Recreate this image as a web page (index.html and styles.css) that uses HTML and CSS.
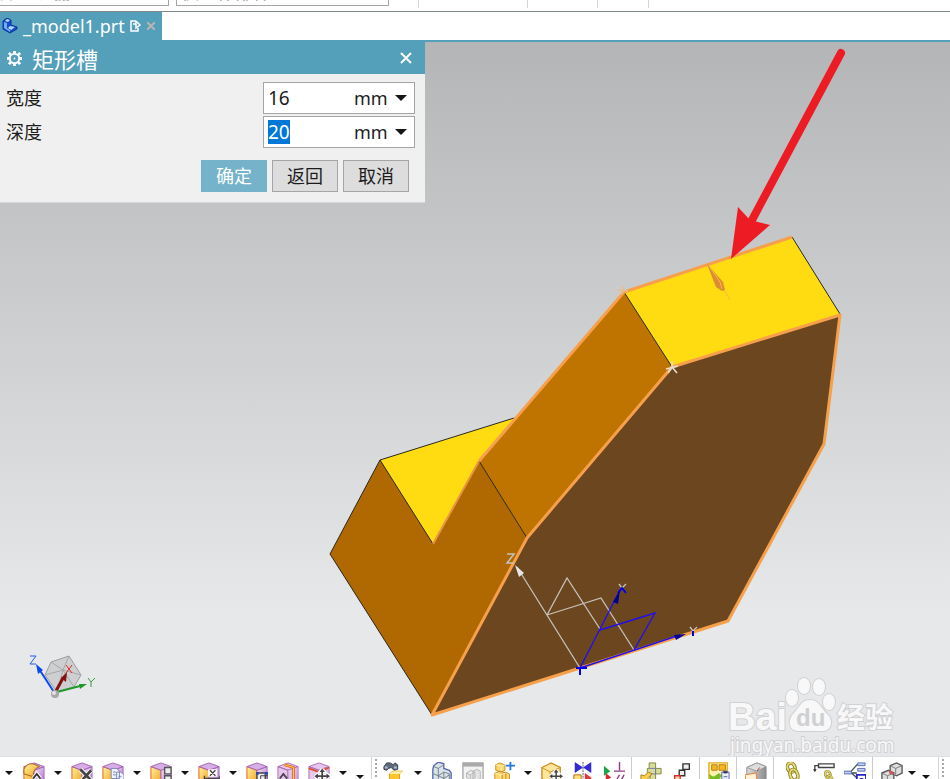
FILE: index.html
```html
<!DOCTYPE html>
<html lang="zh-CN">
<head>
<meta charset="utf-8">
<title>_model1.prt</title>
<link rel="stylesheet" href="styles.css">
</head>
<body>
<svg class="defs" aria-hidden="true">
  <defs>
    <linearGradient id="gold" x1="0" y1="0" x2="1" y2="1"><stop offset="0" stop-color="#fff09a"/><stop offset="1" stop-color="#f0a51e"/></linearGradient>
    <linearGradient id="mauve" x1="0" y1="0" x2="1" y2="1"><stop offset="0" stop-color="#f7e8fb"/><stop offset="1" stop-color="#b06ad0"/></linearGradient>
    <linearGradient id="steel" x1="0" y1="0" x2="1" y2="0"><stop offset="0" stop-color="#dcdcdc"/><stop offset="1" stop-color="#8c8c8c"/></linearGradient>
    <symbol id="cube" viewBox="0 0 24 24">
      <path d="M1 5 12 9V24L1 20Z" fill="url(#gold)" stroke="#e0562e"/>
      <path d="M12 9 23 5V20L12 24Z" fill="url(#mauve)" stroke="#a468b4"/>
      <path d="M1 5 12 1 23 5 12 9Z" fill="#d9aee6" stroke="#9c62ad"/>
    </symbol>
    <symbol id="pinkcube" viewBox="0 0 24 24">
      <path d="M1 5 12 9V24L1 20ZM12 9 23 5V20L12 24ZM1 5 12 1 23 5 12 9Z" fill="#e6c6ec" stroke="#a76caf"/>
      <path d="M12 9 23 5V20L12 24Z" fill="url(#mauve)" opacity=".5"/>
    </symbol>
    <symbol id="move" viewBox="0 0 18 18"><path d="M9 0 12 4H10V8H14V6L18 9 14 12V10H10V18H8V10H4V12L0 9 4 6V8H8V4H6Z" fill="#444" stroke="#fff" stroke-width="3" paint-order="stroke"/></symbol>
    <symbol id="chain" viewBox="0 0 16 24"><g fill="none"><ellipse cx="6" cy="6" rx="4" ry="5" transform="rotate(-20 6 6)" stroke="#8e842d" stroke-width="4"/><ellipse cx="6" cy="6" rx="4" ry="5" transform="rotate(-20 6 6)" stroke="#e8dc70" stroke-width="2"/><ellipse cx="9" cy="14" rx="4" ry="6" transform="rotate(-20 9 14)" stroke="#8e842d" stroke-width="4"/><ellipse cx="9" cy="14" rx="4" ry="6" transform="rotate(-20 9 14)" stroke="#e8dc70" stroke-width="2"/></g></symbol>
    <symbol id="down" viewBox="0 0 12 6"><path d="M0 0H12L6 6Z" fill="#151515"/></symbol>
  </defs>
</svg>

<header class="selection-bar">
  <select class="filter" aria-label="选择过滤器"><option>没有选择过滤器</option></select>
  <select class="scope" aria-label="选择范围"><option>仅工作部件</option></select>
  <div class="cells"><i></i><i class="wide"></i><i class="medium"></i><i class="small"></i></div>
</header>

<nav class="tabs">
  <div class="tab">
    <svg width="16" height="16" viewBox="0 0 16 16" aria-hidden="true"><path d="M1 3 5 0 9 2V7L15 9V11L8 15 1 11Z" fill="#164bc4" stroke="#0934a0"/><path d="M2 4 5 5V10L8 12V14L2 10Z" fill="#70adff"/><path d="M5 1 8 2 6 4 3 3ZM8 8 13 9 9 12 6 10Z" fill="#b3d5ff"/></svg>
    <a href="#scene">_model1.prt</a>
    <svg width="11" height="12" viewBox="0 0 11 12" aria-hidden="true"><path d="M6 1H1V11H8V8M3 4H6M6 1 10 5 6 8V1" fill="none" stroke="#fff" stroke-width="1.5"/></svg>
    <button class="tab-close" type="button" aria-label="关闭"><svg width="8" height="8" viewBox="0 0 8 8"><path d="M0 0 8 8M8 0 0 8" stroke="#b9b4b2" stroke-width="2"/></svg></button>
  </div>
</nav>

<main class="viewport" id="scene">
  <svg class="scene" viewBox="0 42 950 714" preserveAspectRatio="xMinYMin slice" role="img" aria-label="模型">
    <g stroke-linejoin="round">
      <path d="M380 460 514 418 479 461 433 544Z" fill="#ffdb11"/>
      <path d="M380 460 433 544 479 461 527 538 432 715 330 554Z" fill="#b06900"/>
      <path d="M624 292 672 367 527 538 479 461Z" fill="#bf7400"/>
      <path d="M624 292 792 237 840 314 672 367Z" fill="#ffdb11"/>
      <path d="M672 367 840 315 824 444 728 621 432 715 527 538Z" fill="#6c461f"/>
      <path d="M514 418 380 460 433 544M380 460 330 554 432 715M479 461 527 538M624 292 672 367M792 237 840 314" fill="none" stroke="#282820"/>
      <path d="M433 544 479 461" stroke="#e89545" stroke-width="2"/>
      <path d="M479 461 624 292 792 237M672 367 840 315 824 444 728 621 432 715 527 538Z" fill="none" stroke="#f7a04b" stroke-width="3"/>
    </g>
    <path d="M707 264 723 282 725 290 722 291 716 287Z" fill="#db8d31"/><path d="M709 266 720 282 722 289M724 290 730 300" fill="none" stroke="#ffb44e"/>
    <path d="M666 369 678 366M672 361V367L668 373M672 367 677 373" stroke="#e4ddd0" stroke-width="1.6" fill="none"/>
    <path d="M617 290 628 291M622 286 624 291 619 295" stroke="#e8bd8e" stroke-width="1.4" fill="none"/>
    <g fill="none" stroke="#c5c2bc" stroke-width="1.3">
      <path d="M580 668 517 567M547 615 567 578 600 629M547 615 601 598 634 650"/>
      <path d="M507 554H514L507 563H514" stroke-width="1.5"/><path d="M619 584 622 588 626 584M690 627 693 631 697 627"/>
    </g>
    <path d="M515 565 524 573 519 577Z" fill="#e6e6e6"/>
    <path d="M580 668 620 590M600 630 655 613 634 650M580 668 680 635" fill="none" stroke="#2110e8" stroke-width="1.4"/>
    <path d="M576 668H587M580 668V675M618 593 622 588 626 593M693 631V636" fill="none" stroke="#0000ee" stroke-width="2"/>
    <path d="M620 590 613 602 618 604ZM686 634 674 635 676 640Z" fill="#000097"/>
    <path d="M841 53 751 222" stroke="#ed1c24" stroke-width="8" stroke-linecap="round"/>
    <path d="M731 259 738 207 750 220 770 225Z" fill="#ed1c24"/>
    <path d="M45 675 51 662 69 656 81 675 74 687 57 692Z" fill="#cecfd0" stroke="#9c9d9e"/>
    <path d="M45 675 63 670 81 675M51 662 63 670 74 687M69 656 63 670 57 692" fill="none" stroke="#a7a8a9"/>
    <path d="M54 692 39 669" stroke="#0c46ef" stroke-width="2"/><path d="M36 664 43 670 38 674Z" fill="#0c46ef"/>
    <path d="M30 656H36L30 664H36" fill="none" stroke="#245ae2"/>
    <path d="M57 692 80 686" stroke="#21982c" stroke-width="2"/><path d="M87 684 79 684 80 689Z" fill="#21982c"/>
    <path d="M88 678 91 682 95 678M91 682V687" fill="none" stroke="#379b3e"/>
    <path d="M56 691 63 678" stroke="#861111" stroke-width="3"/><path d="M67 672 61 678 66 682Z" fill="#861111"/><path d="M66 665 72 673M72 665 66 673" stroke="#e02929"/>
    <circle cx="55" cy="694" r="4" fill="#a8a8a8"/><circle cx="54" cy="693" r="2" fill="#e2e2e2"/>
    <g class="watermark" fill="#f8f8f8" stroke="#d0d1d3" paint-order="stroke">
      <ellipse cx="792" cy="698" rx="6" ry="8"/><ellipse cx="804" cy="686" rx="6" ry="8"/><ellipse cx="819" cy="687" rx="6" ry="8"/><ellipse cx="829" cy="702" rx="6" ry="8"/>
      <path d="M810 700C819 700 821 708 827 714 834 720 832 731 822 731 816 731 804 731 799 731 788 731 788 720 793 714 800 707 801 700 810 700Z"/>
      <text class="logo" x="728" y="730">Bai</text><text class="exp" x="837" y="728">经验</text><text class="site" x="730" y="752">jingyan.baidu.com</text>
      <text class="du" x="796" y="726">du</text>
    </g>
  </svg>

  <form class="dialog" aria-labelledby="dialog-title">
    <div class="titlebar">
      <svg width="15" height="15" viewBox="0 0 16 16" aria-hidden="true"><circle cx="8" cy="8" r="5" fill="none" stroke="#fff" stroke-width="2"/><path d="M8 0V3M8 13V16M0 8H3M13 8H16M2 2 4 4M12 12 14 14M2 14 4 12M12 4 14 2" stroke="#fff" stroke-width="3"/><circle cx="8" cy="8" r="1" fill="#fff"/></svg>
      <h1 id="dialog-title">矩形槽</h1>
      <button class="close" type="button" aria-label="关闭"><svg width="12" height="12" viewBox="0 0 12 12"><path d="M1 1 11 11M11 1 1 11" stroke="#fff" stroke-width="2"/></svg></button>
    </div>
    <div class="fields">
      <div class="field"><label for="width">宽度</label><div class="combo"><input id="width" value="16"><select aria-label="宽度单位"><option>mm</option></select><svg width="12" height="6"><use href="#down"/></svg></div></div>
      <div class="field"><label for="depth">深度</label><div class="combo"><input id="depth" value="20"><select aria-label="深度单位"><option>mm</option></select><svg width="12" height="6"><use href="#down"/></svg></div></div>
    </div>
    <div class="actions"><button class="primary" type="button">确定</button><button type="button">返回</button><button type="button">取消</button></div>
  </form>
</main>

<footer class="toolbar">
  <button class="caret first" aria-label="更多"><svg><use href="#down"/></svg></button>
  <button class="tool" aria-label="移动面"><svg viewBox="0 0 24 24"><use href="#cube"/><path d="M1 8Q4 1 11 2L18 5Q11 7 11 16L1 13Z" fill="url(#gold)" stroke="#a75b12"/><path d="M11 18 15 13 19 18" fill="none" stroke="#fff" stroke-width="4"/><path d="M11 18 15 13 19 18" fill="none" stroke="#333" stroke-width="2"/></svg></button>
  <button class="caret" aria-label="更多"><svg><use href="#down"/></svg></button>
  <button class="tool" aria-label="删除面"><svg viewBox="0 0 24 24"><use href="#cube"/><path d="M10 8 22 20M22 9 12 20" stroke="#fff" stroke-width="5"/><path d="M10 8 22 20M22 9 12 20" stroke="#444" stroke-width="3"/></svg></button>
  <button class="tool" aria-label="复制面"><svg viewBox="0 0 24 24"><use href="#cube"/><path d="M10 7H16L19 10V18H10ZM16 11H21L24 14V22H16Z" fill="#eef1ff" stroke="#7582b5"/><path d="M12 11H15M12 14H15M18 16H21" stroke="#7582b5"/></svg></button>
  <button class="caret" aria-label="更多"><svg><use href="#down"/></svg></button>
  <button class="tool" aria-label="组合面"><svg viewBox="0 0 24 24"><use href="#cube"/><path d="M16 6H23V13H16ZM16 15H23V22H16Z" fill="#eee" stroke="#555" stroke-width="1.5"/></svg></button>
  <button class="caret" aria-label="更多"><svg><use href="#down"/></svg></button>
  <button class="tool" aria-label="线性尺寸"><svg viewBox="0 0 24 24"><use href="#cube"/><path d="M11 8H21V16H11Z" fill="#fff"/><path d="M13 9 19 15M19 9 13 15M7 15V20M24 15V20M7 18H24" stroke="#444" stroke-width="1.5"/></svg></button>
  <button class="caret" aria-label="更多"><svg><use href="#down"/></svg></button>
  <button class="tool" aria-label="调整面大小"><svg viewBox="0 0 24 24"><use href="#cube"/><path d="M12 12H21V20H12Z" fill="#eee" stroke="#444" stroke-width="1.5"/><path d="M16 15H24V22H16Z" fill="none" stroke="#333"/><path d="M11 11H14V14H11ZM21 11H24V14H21Z" fill="#2d42c4"/></svg></button>
  <button class="tool" aria-label="偏置区域"><svg viewBox="0 0 24 24"><use href="#pinkcube"/><path d="M8 3 18 6V22" fill="none" stroke="#e76822" stroke-width="3"/><path d="M8 3 18 6V22" fill="none" stroke="#ffd35a"/><path d="M3 18 7 13 11 18" fill="none" stroke="#444" stroke-width="2"/></svg></button>
  <button class="tool" aria-label="移动区域"><svg viewBox="0 0 24 24"><use href="#pinkcube"/><path d="M1 7 12 11 23 6" fill="none" stroke="#e34a29" stroke-width="2"/><use href="#move" x="7" y="7" width="17" height="17"/></svg></button>
  <button class="caret" aria-label="更多"><svg><use href="#down"/></svg></button>
  <button class="caret low" aria-label="工具栏选项"><svg><use href="#down"/></svg></button>
  <span class="grip"></span>
  <button class="tool" aria-label="查找组件"><svg viewBox="0 0 24 24"><path d="M1 5 4 1H8L11 3 13 1 16 3V8L12 9 9 6 6 7 4 9 1 8Z" fill="#606978" stroke="#343b46"/><path d="M2 6H5M12 6H15" stroke="#a8c0da" stroke-width="2"/><path d="M7 13 11 10H21L18 13V24H7Z" fill="#ffc52a" stroke="#d99817"/><path d="M7 13 11 10H21L18 13Z" fill="#fff0a0"/></svg></button>
  <button class="caret" aria-label="更多"><svg><use href="#down"/></svg></button>
  <button class="tool" aria-label="装配"><svg viewBox="0 0 24 24"><path d="M3 4 8 0 14 2V7L20 9 22 12V24H2V8Z" fill="#d9e3e9" stroke="#5969b6" stroke-width="1.5"/><path d="M3 5 8 7 14 3M8 7V24M3 13 8 15 14 11V24M14 11 20 13V24M8 15 14 18 20 14" fill="none" stroke="#707d82"/></svg></button>
  <button class="tool" aria-label="组件预览"><svg viewBox="0 0 24 24"><path d="M1 1H23V24H1Z" fill="#f2f2f2" stroke="#aaa" stroke-width="1.5"/><path d="M1 3H23" stroke="#aaa" stroke-width="4"/><path d="M5 12 10 9 14 11V17L9 20 5 17ZM12 10 16 8 20 10V18L16 21 12 18ZM5 12 9 14 14 11M9 14V20" fill="#e4e4e4" stroke="#b4b4b4"/></svg></button>
  <button class="tool" aria-label="添加组件"><svg viewBox="0 0 24 24"><path d="M3 3 7 1 13 3V9L9 11 3 9ZM2 12 8 10 14 12V24H2ZM10 13 14 11 18 13V24H10Z" fill="#ffd66a" stroke="#c08b26"/><path d="M3 3 9 5 13 3M9 5V10M2 12 8 14 14 12M8 14V24" fill="none" stroke="#fff2b8"/><path d="M19 0V9M14 4H24" stroke="#2478df" stroke-width="2"/></svg></button>
  <button class="caret" aria-label="更多"><svg><use href="#down"/></svg></button>
  <button class="tool" aria-label="移动组件"><svg viewBox="0 0 24 24"><path d="M1 6 11 1 21 6V18L10 24 1 18Z" fill="#ffe599" stroke="#c98e28" stroke-width="1.5"/><path d="M1 6 10 11 21 6M10 11V24" fill="none" stroke="#c98e28"/><use href="#move" x="9" y="8" width="15" height="15"/></svg></button>
  <button class="tool" aria-label="镜像装配"><svg viewBox="0 0 24 24"><path d="M3 0 12 6 3 12ZM21 0 12 6 21 12Z" fill="#322bd1"/><path d="M12 0V24" stroke="#444" stroke-dasharray="2 1"/><path d="M2 14H10V24H2Z" fill="#ffe07b" stroke="#a56c15"/><path d="M14 12 21 17V24H14Z" fill="#e2383d"/></svg></button>
  <button class="tool" aria-label="装配约束"><svg viewBox="0 0 24 24"><path d="M1 4 8 10 1 15Z" fill="#19a646"/><path d="M3 12 9 17 3 20Z" fill="#da252c"/><path d="M18 0V9M12 10H24M14 21 18 14M19 21 23 14" stroke="#913a82" stroke-width="1.5"/></svg></button>
  <span class="divider"></span>
  <button class="tool" aria-label="编辑"><svg viewBox="0 0 24 24"><path d="M10 1H17V7H23V13H17V20H11V13H8V7H10Z" fill="#d7dc9a" stroke="#82823b"/><path d="M10 7H17V13M17 7V13H11" fill="none" stroke="#7078ad"/><path d="M1 14 5 15 9 11 13 13 7 20 1 20Z" fill="#f9cf4b" stroke="#a37c1e"/></svg></button>
  <button class="tool" aria-label="序列"><svg viewBox="0 0 24 24"><path d="M13 2H20V8H13ZM9 9H15V15H9Z" fill="#eee" stroke="#333" stroke-width="1.5"/><path d="M4 15H10V22H4Z" fill="#ffdbac" stroke="#df2525" stroke-width="1.5"/></svg></button>
  <span class="divider"></span>
  <button class="tool" aria-label="检查"><svg viewBox="0 0 24 24"><path d="M1 1H21V24H1Z" fill="#fff1b0" stroke="#e9aa21" stroke-width="1.5"/><path d="M4 3H10V9H4ZM12 3H19V9H12Z" fill="#f3b91f" stroke="#b67b10"/><path d="M1 13 6 16 12 12 15 15 10 22H2Z" fill="#78bc24"/><path d="M15 11H23V24H15Z" fill="#eef" stroke="#52619a"/><path d="M17 10H21V12H17ZM17 16H21M17 19H21" stroke="#52619a"/></svg></button>
  <span class="divider"></span>
  <button class="tool" aria-label="产品接口"><svg viewBox="0 0 24 24"><path d="M2 6 13 1 23 5V20L13 24 2 19Z" fill="url(#steel)" stroke="#888"/><path d="M2 6 13 10 23 5 13 1Z" fill="#ddd" stroke="#999"/><path d="M13 10 16 6" stroke="#bc342a"/><path d="M0 14 12 12 13 19 1 22Z" fill="#fff1d7" stroke="#e57a2b"/></svg></button>
  <span class="divider"></span>
  <button class="tool" aria-label="链接"><svg viewBox="0 0 24 24"><use href="#chain" x="4" y="0" width="16" height="24"/></svg></button>
  <button class="tool" aria-label="部件间链接"><svg viewBox="0 0 24 24"><path d="M6 2H23V6H6ZM6 4H2V10" fill="none" stroke="#444" stroke-width="1.5"/><path d="M0 8H4L2 11Z" fill="#333"/><use href="#chain" x="12" y="9" width="11" height="17"/></svg></button>
  <button class="tool" aria-label="关系浏览器"><svg viewBox="0 0 24 24"><path d="M1 11H7L15 2M7 12H14M8 12 15 18" fill="none" stroke="#44505b" stroke-width="1.5"/><path d="M15 1H23V4H15ZM15 7H23V10H15ZM0 10H8V13H0Z" fill="#c1d1fa" stroke="#526aa6"/><path d="M14 14H24V23H14Z" fill="#fff" stroke="#2525c4" stroke-width="2"/><path d="M17 18H21" stroke="#2525c4"/></svg></button>
  <span class="divider"></span>
  <button class="tool" aria-label="间隙分析"><svg viewBox="0 0 24 24"><path d="M10 4 17 1 23 4V12L17 15 10 12ZM1 12 8 9 14 12V20L7 23 1 20Z" fill="#dedede" stroke="#595959" stroke-width="1.5"/><path d="M10 4 16 7 23 4M16 7V15M1 12 7 15 14 12M7 15V23" fill="none" stroke="#777"/><path d="M9 9 13 11V14L9 12Z" fill="#eb4b50"/></svg></button>
  <button class="caret compact" aria-label="更多"><svg><use href="#down"/></svg></button>
  <button class="caret low" aria-label="工具栏选项"><svg><use href="#down"/></svg></button>
  <span class="grip last"></span>
</footer>
<script src="page.js"></script>
</body>
</html>
```
FILE: styles.css
```css
* { box-sizing: border-box; }
body {
  margin: 0;
  height: 100vh;
  display: flex;
  flex-direction: column;
  overflow: hidden;
  background: #fff;
  color: #1c1c1c;
  font: 18px/24px "Noto Sans", "Noto Sans CJK SC", sans-serif;
}
button, input, select { font: inherit; color: inherit; border-radius: 0; }
button { padding: 0; border: 0; background: none; }
svg { display: block; flex-shrink: 0; }
.defs { position: absolute; width: 0; height: 0; }

.selection-bar {
  height: 12px;
  flex-shrink: 0;
  display: flex;
  align-items: flex-end;
  overflow: hidden;
  border-bottom: 1px solid #81888b;
}
.selection-bar select {
  appearance: none;
  height: 28px;
  margin: 0 0 5px;
  padding: 0 4px;
  border: 1px solid #a5a5a5;
  background: #fff;
  color: #888;
}
.selection-bar .filter { width: 229px; margin-left: -60px; }
.selection-bar .scope { width: 213px; margin-left: 7px; }
.cells { display: flex; height: 8px; align-self: flex-start; }
.cells i { width: 30px; border-right: 1px solid #d5d5d5; }
.cells .wide { width: 109px; }
.cells .medium { width: 70px; }
.cells .small { width: 51px; }

.tabs {
  height: 30px;
  flex-shrink: 0;
  display: flex;
  border-bottom: 2px solid #549fb9;
}
.tab {
  display: flex;
  align-items: center;
  gap: 5px;
  padding: 0 6px 0 2px;
  background: #549fb9;
}
.tab a { color: #fff; font: 18px/28px "Noto Sans", sans-serif; text-decoration: none; }
.tab-close { padding: 0 1px; }

.viewport {
  flex: 1;
  min-height: 0;
  position: relative;
  overflow: hidden;
  background: linear-gradient(#b4b5b7, #e7e8ea 80%);
}
.scene { width: 100%; height: 100%; }
.watermark { stroke-width: 2px; }
.watermark .logo { font: bold 38px "Liberation Sans", sans-serif; }
.watermark .du { font: bold 24px "Liberation Sans", sans-serif; fill: #cfd0d2; stroke: none; }
.watermark .exp { font: bold 28px "Noto Sans CJK SC", sans-serif; }
.watermark .site { font: 19px "Noto Sans", sans-serif; }

.dialog {
  position: absolute;
  top: 0;
  left: 0;
  width: 425px;
  max-width: 100%;
  padding-bottom: 10px;
  background: #f0f0f0;
  border-bottom: 1px solid #d5d6d7;
}
.titlebar {
  height: 32px;
  display: flex;
  align-items: center;
  gap: 10px;
  padding: 0 13px 0 7px;
  background: #549fb9;
  color: #fff;
}
.titlebar h1 { margin: 0; flex: 1; font: 22px/32px "Noto Sans CJK SC", sans-serif; }
.fields { display: grid; gap: 2px; padding: 8px 10px 12px 6px; }
.field { display: flex; justify-content: space-between; align-items: center; }
.combo {
  width: 152px;
  height: 32px;
  display: flex;
  align-items: center;
  padding: 0 7px 0 4px;
  border: 1px solid #a5a5a5;
  background: #fff;
  font-size: 19px;
}
.combo input {
  width: 86px;
  height: 24px;
  padding: 0;
  border: 0;
  outline: 0;
  background: none;
}
.combo input::selection { background: #0078d7; color: #fff; }
.combo select {
  appearance: none;
  width: 34px;
  padding: 0;
  border: 0;
  background: none;
  font-size: 18px;
}
.combo svg { margin-left: auto; }
.actions { display: flex; justify-content: flex-end; gap: 5px; padding-right: 16px; }
.actions button {
  width: 66px;
  height: 32px;
  border: 1px solid #a5a5a5;
  background: #ddd;
}
.actions .primary { border-color: #74b3c9; background: #74b3c9; color: #fff; }

.toolbar {
  height: 23px;
  flex-shrink: 0;
  display: flex;
  align-items: flex-start;
  overflow: hidden;
  border-top: 1px solid #dfe0e1;
  background: #fff;
}
.tool { width: 31px; flex-shrink: 0; padding: 5px 4px 0 5px; }
.tool svg { width: 22px; height: 22px; }
.caret { width: 17px; height: 22px; flex-shrink: 0; padding: 14px 5px 0; }
.caret { display: flex; align-items: flex-start; }
.caret svg { width: 8px; height: 4px; }
.caret.first { width: 18px; }
.caret.compact { width: 10px; padding: 14px 1px 0; }
.caret.low { padding-top: 18px; }
.divider { width: 4px; height: 22px; flex-shrink: 0; border-left: 1px solid #ccc; margin-left: 2px; }
.grip {
  width: 7px;
  height: 22px;
  flex-shrink: 0;
  margin-left: 3px;
  border-left: 1px solid #d5d5d5;
  background: repeating-linear-gradient(#fff 0 2px, #aaa 2px 4px) 3px 0 / 2px 100% no-repeat;
}
.grip.last { margin-left: 4px; }
```
FILE: page.js
```js
const depth = document.getElementById("depth");
depth.focus();
depth.select();
```
